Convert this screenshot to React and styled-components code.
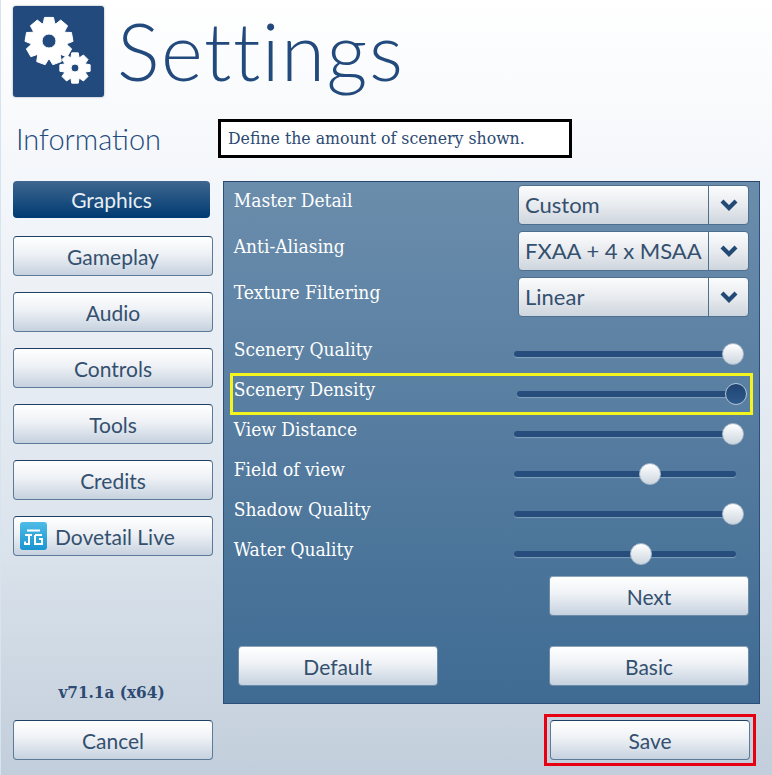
import React from "react";
import styled, { createGlobalStyle, css } from "styled-components";

const UI_FONT = `"Lato", "Open Sans", sans-serif`;
const LABEL_FONT = `"DejaVu Serif Condensed", "DejaVu Serif", serif`;

const GlobalStyle = createGlobalStyle`
  html, body {
    margin: 0;
    padding: 0;
    width: 772px;
    height: 775px;
    overflow: hidden;
  }
  * { box-sizing: border-box; }
`;

const Page = styled.div`
  width: 772px;
  height: 775px;
  padding: 6px 12px 0;
  border-left: 1px solid #d5e4ef;
  background: linear-gradient(180deg, #ffffff 0%, #f3f6fa 25%, #dbe3ec 70%, #c2cedb 100%);
  font-family: ${UI_FONT};
`;

const Header = styled.header`
  display: flex;
  height: 91px;
`;

const IconTile = styled.div`
  width: 91px;
  height: 91px;
  border-radius: 3px;
  background: #234a7c;
  box-shadow: 0 0 2px rgba(30, 50, 80, 0.5);
`;

const Title = styled.h1`
  margin: 0 0 0 13px;
  font-size: 80px;
  line-height: 88px;
  font-weight: 300;
  color: #234a7c;
  letter-spacing: 1.5px;
`;

const InfoRow = styled.div`
  display: flex;
  align-items: flex-start;
  height: 84px;
  padding-top: 22px;
`;

const InfoHeading = styled.h2`
  width: 205px;
  margin: 0;
  padding: 3px 0 0 3px;
  font-size: 29px;
  line-height: 34px;
  font-weight: 300;
  color: #234a7c;
`;

const InfoBox = styled.div`
  width: 354px;
  height: 39px;
  padding: 0 7px;
  border: 3px solid #000;
  background: #fff;
  font-family: ${LABEL_FONT};
  font-size: 17.5px;
  font-weight: 500;
  line-height: 32px;
  color: #2c4a72;
  white-space: nowrap;
`;

const Main = styled.div`
  display: flex;
  align-items: flex-start;
`;

const Sidebar = styled.nav`
  display: flex;
  flex-direction: column;
  width: 210px;
`;

const buttonFace = css`
  background: linear-gradient(180deg, #ffffff 0%, #eef1f5 45%, #c6d2df 100%);
  border: 1px solid #5c7a98;
  border-top-color: #1f3f63;
  border-radius: 4px;
  color: #34506f;
`;

const Button = styled.button`
  ${buttonFace}
  display: flex;
  align-items: center;
  justify-content: center;
  gap: 8px;
  width: ${(p) => p.$width}px;
  height: 40px;
  padding: 0;
  font-family: ${UI_FONT};
  font-size: 21px;
  font-weight: 400;
`;

const SideButton = styled(Button).attrs({ $width: 200 })`
  margin-bottom: 16px;
  ${(p) => p.$logo && css`justify-content: flex-start; padding-left: 6px;`}
`;

const ActiveButton = styled.button`
  width: 197px;
  height: 37px;
  margin-bottom: 18px;
  padding: 0;
  border: 0;
  border-radius: 4px;
  background: linear-gradient(180deg, #3e678f 0%, #003a72 100%);
  color: #e8eef4;
  font-family: ${UI_FONT};
  font-size: 21px;
`;

const Version = styled.div`
  width: 197px;
  margin-top: 109px;
  text-align: center;
  font-family: ${LABEL_FONT};
  font-size: 17px;
  font-weight: 700;
  line-height: 22px;
  color: #2c4a72;
`;

const Panel = styled.section`
  width: 538px;
  height: 523px;
  margin-left: 0;
  padding: 3px 10px 0 10px;
  background: linear-gradient(180deg, #6b8dac 0%, #3f6b93 100%);
  border: 1px solid #2b4f78;
  border-top-color: #27476c;
`;

const SelectRow = styled.div`
  display: flex;
  align-items: flex-start;
  justify-content: space-between;
  height: 46px;
  padding-right: 0;
`;

const Label = styled.span`
  font-family: ${LABEL_FONT};
  font-size: 19px;
  font-weight: 500;
  line-height: 26px;
  color: #fff;
  white-space: nowrap;
`;

const SelectLabel = styled(Label)`
  padding-top: 2px;
`;

const Select = styled.div`
  ${buttonFace}
  display: flex;
  width: 231px;
  height: 40px;
  border-color: #4f6f8e;
  background: linear-gradient(180deg, #fbfcfd 0%, #e6e9ed 55%, #cdd5dd 100%);
`;

const SelectValue = styled.span`
  flex: 1;
  padding-left: 6px;
  font-size: 22px;
  line-height: 38px;
  color: #34506f;
`;

const SelectArrow = styled.span`
  display: flex;
  align-items: center;
  justify-content: center;
  width: 40px;
  border-left: 1px solid #4f6f8e;
`;

const Sliders = styled.div`
  display: flex;
  flex-direction: column;
  margin-top: 11px;
`;

const SliderRow = styled.div`
  display: flex;
  align-items: center;
  justify-content: space-between;
  height: ${(p) => p.$height || 40}px;
  margin: 0 -4px;
  padding: 0 4px 0 4px;
  ${(p) => p.$highlight && css`
    border: 3px solid #f4f41e;
    padding: 0 1px;
    height: 42px;
    margin: -1px -4px;
  `}
`;

const SliderLabel = styled(Label)`
  margin-top: -11px;
`;

const Track = styled.div`
  position: relative;
  width: 222px;
  height: 6px;
  margin-right: ${(p) => (p.$highlight ? 10 : 13)}px;
  border-radius: 3px;
  background: #264d7b;
  box-shadow: 0 1px 1px rgba(190, 210, 225, 0.45);
`;

const Knob = styled.span`
  position: absolute;
  top: 50%;
  width: 22px;
  height: 22px;
  margin: -11px 0 0 -11px;
  border-radius: 50%;
  background: ${(p) =>
    p.$focused
      ? "linear-gradient(180deg, #1f4472, #2f5a8c)"
      : "linear-gradient(180deg, #ffffff, #cdd6df)"};
  border: 1px solid ${(p) => (p.$focused ? "#b5c6d6" : "#a9bacb")};
`;

const ButtonRow = styled.div`
  display: flex;
  justify-content: ${(p) => p.$justify || "flex-end"};
  margin-top: ${(p) => p.$top}px;
  padding: ${(p) => (p.$justify ? "0 0 0 4px" : "0")};
  padding-right: 0;
`;

const PanelButton = styled(Button)`
  border: 1px solid #6d8aa6;
  border-top-color: #8ca4ba;
`;

const Footer = styled.footer`
  display: flex;
  align-items: center;
  justify-content: space-between;
  width: 743px;
  margin-top: 10px;
`;

const SaveHighlight = styled.div`
  padding: 3px;
  border: 3px solid #e60012;
  margin-top: 0;
`;

const gearPath = (cx, cy, outer, inner, hole, teeth) => {
  const pts = [];
  const step = (Math.PI * 2) / teeth;
  for (let i = 0; i < teeth; i++) {
    const a = i * step - Math.PI / 2;
    [
      [-0.5, inner],
      [-0.3, outer],
      [0.3, outer],
      [0.5, inner],
    ].forEach(([o, r]) => {
      pts.push(`${(cx + Math.cos(a + o * step * 0.9) * r).toFixed(2)} ${(cy + Math.sin(a + o * step * 0.9) * r).toFixed(2)}`);
    });
  }
  const circle = `M${cx - hole} ${cy}a${hole} ${hole} 0 1 0 ${hole * 2} 0a${hole} ${hole} 0 1 0 ${-hole * 2} 0Z`;
  return `M${pts.join("L")}Z${circle}`;
};

const GearsIcon = () => (
  <svg width="91" height="91" viewBox="0 0 91 91">
    <path fill="#fff" fillRule="evenodd" stroke="#fff" strokeWidth="1" strokeLinejoin="round" d={gearPath(36, 35, 24, 18.5, 7, 9)} />
    <path fill="#234a7c" d="M54 62a10 10 0 1 0 20 -16a16 16 0 0 0 -20 16Z" opacity="0" />
    <path fill="#fff" fillRule="evenodd" stroke="#fff" strokeWidth="1" strokeLinejoin="round" d={gearPath(62, 62, 15.5, 11.5, 4, 8)} />
  </svg>
);

const Chevron = () => (
  <svg width="20" height="14" viewBox="0 0 20 14">
    <polyline points="3,3 10,10 17,3" fill="none" stroke="#234a75" strokeWidth="4.2" />
  </svg>
);

const DovetailLogo = () => (
  <svg width="27" height="28" viewBox="0 0 27 28">
    <defs>
      <linearGradient id="dtg" x1="0" y1="0" x2="0" y2="1">
        <stop offset="0" stopColor="#4dbbe6" />
        <stop offset="1" stopColor="#1b95d2" />
      </linearGradient>
    </defs>
    <rect width="27" height="28" rx="3" fill="url(#dtg)" />
    <path
      d="M7 8.5h13M5 13h7M9 13v9H5v-2.5M15 13h7M15 13v9h7v-5h-3"
      fill="none"
      stroke="#fff"
      strokeWidth="2"
    />
  </svg>
);

const selects = [
  ["Master Detail", "Custom"],
  ["Anti-Aliasing", "FXAA + 4 x MSAA"],
  ["Texture Filtering", "Linear"],
];

const sliders = [
  ["Scenery Quality", 100],
  ["Scenery Density", 100, true],
  ["View Distance", 100],
  ["Field of view", 62],
  ["Shadow Quality", 100],
  ["Water Quality", 58],
];

const sideItems = ["Gameplay", "Audio", "Controls", "Tools", "Credits"];

const App = () => (
  <>
    <GlobalStyle />
    <Page>
      <Header>
        <IconTile>
          <GearsIcon />
        </IconTile>
        <Title>Settings</Title>
      </Header>
      <InfoRow>
        <InfoHeading>Information</InfoHeading>
        <InfoBox>Define the amount of scenery shown.</InfoBox>
      </InfoRow>
      <Main>
        <Sidebar>
          <ActiveButton>Graphics</ActiveButton>
          {sideItems.map((item) => (
            <SideButton key={item}>{item}</SideButton>
          ))}
          <SideButton $logo>
            <DovetailLogo />
            Dovetail Live
          </SideButton>
          <Version>v71.1a (x64)</Version>
        </Sidebar>
        <Panel>
          {selects.map(([label, value]) => (
            <SelectRow key={label}>
              <SelectLabel>{label}</SelectLabel>
              <Select>
                <SelectValue>{value}</SelectValue>
                <SelectArrow>
                  <Chevron />
                </SelectArrow>
              </Select>
            </SelectRow>
          ))}
          <Sliders>
            {sliders.map(([label, value, focused]) => (
              <SliderRow key={label} $highlight={focused}>
                <SliderLabel>{label}</SliderLabel>
                <Track $highlight={focused}>
                  <Knob $focused={focused} style={{ left: `${value * 0.985}%` }} />
                </Track>
              </SliderRow>
            ))}
          </Sliders>
          <ButtonRow $top={2}>
            <PanelButton $width={200}>Next</PanelButton>
          </ButtonRow>
          <ButtonRow $top={30} $justify="space-between">
            <PanelButton $width={200}>Default</PanelButton>
            <PanelButton $width={200}>Basic</PanelButton>
          </ButtonRow>
        </Panel>
      </Main>
      <Footer>
        <Button $width={200}>Cancel</Button>
        <SaveHighlight>
          <Button $width={200}>Save</Button>
        </SaveHighlight>
      </Footer>
    </Page>
  </>
);

export default App;
